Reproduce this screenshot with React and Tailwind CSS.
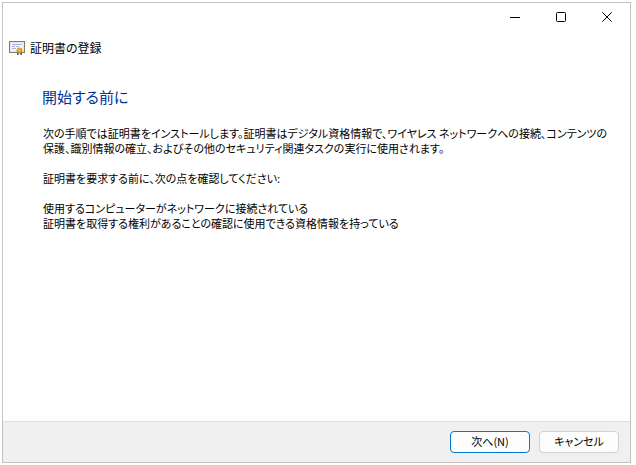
function CertificateIcon() {
  return (
    <svg width="16" height="14" viewBox="0 0 16 14" aria-hidden="true" className="shrink-0">
      <rect x="0.5" y="0.5" width="15" height="11" fill="#f2f4fb" stroke="#8a7863" />
      <rect x="1.5" y="1.5" width="13" height="9" fill="none" stroke="#ece5da" />
      <path d="M3 3.5h10M3 5.5h3M7 5.5h3M3 7.5h4" stroke="#a3b0e0" />
      <path d="M8 10v4h1l1-1v-3zM11 10v3l1 1h1v-4z" fill="#2a6fe0" />
      <circle cx="10.5" cy="9.5" r="2.6" fill="#e3a21a" stroke="#bd7c10" strokeWidth="0.6" />
      <circle cx="10.3" cy="9.2" r="1" fill="#f8cb4a" />
    </svg>
  );
}

function CaptionButton({ label, children }) {
  return (
    <button type="button" aria-label={label} className="flex h-7 w-[46px] items-center justify-center">
      <svg width="10" height="10" viewBox="0 0 10 10" fill="none" stroke="#000" aria-hidden="true">
        {children}
      </svg>
    </button>
  );
}

export default function App() {
  return (
    <div className="flex h-screen flex-col bg-white py-[2px] pr-[5px] pl-[2px] font-['Noto_Sans_CJK_JP',sans-serif] text-[11px] leading-[15px] text-black [font-feature-settings:'palt']">
      <div className="flex flex-1 flex-col border border-[#c3c3c3]">
        <header>
          <div className="flex justify-end">
            <CaptionButton label="最小化">
              <path d="M0 5.5h10" />
            </CaptionButton>
            <CaptionButton label="最大化">
              <rect x="0.5" y="0.5" width="9" height="9" rx="1" />
            </CaptionButton>
            <CaptionButton label="閉じる">
              <path d="M0.3 0.3l9.4 9.4M9.7 0.3L0.3 9.7" />
            </CaptionButton>
          </div>
          <div className="flex items-center gap-[5px] px-[6px] pt-[9px] text-xs leading-[15px]">
            <CertificateIcon />
            <span>証明書の登録</span>
          </div>
        </header>
        <main className="flex-1 px-[39px] pt-8">
          <h1 className="text-[15px] leading-5 text-[#003399]">開始する前に</h1>
          <div className="mt-[19px] space-y-[15px] pl-px whitespace-nowrap">
            <p>
              次の手順では証明書をインストールします。証明書はデジタル資格情報で、ワイヤレス ネットワークへの接続、コンテンツの
              <br />
              保護、識別情報の確立、およびその他のセキュリティ関連タスクの実行に使用されます。
            </p>
            <p>証明書を要求する前に、次の点を確認してください:</p>
            <p>
              使用するコンピューターがネットワークに接続されている
              <br />
              証明書を取得する権利があることの確認に使用できる資格情報を持っている
            </p>
          </div>
        </main>
        <footer className="flex justify-end gap-[9px] border-t border-[#dfdfdf] bg-[#f0f0f0] px-[11px] py-[9px]">
          <button type="button" className="h-[22px] w-20 rounded border border-[#0078d4] bg-[#fdfdfd] pb-px">
            次へ(N)
          </button>
          <button type="button" className="h-[22px] w-20 rounded border border-[#d0d0d0] bg-[#fdfdfd] pb-px">
            キャンセル
          </button>
        </footer>
      </div>
    </div>
  );
}
